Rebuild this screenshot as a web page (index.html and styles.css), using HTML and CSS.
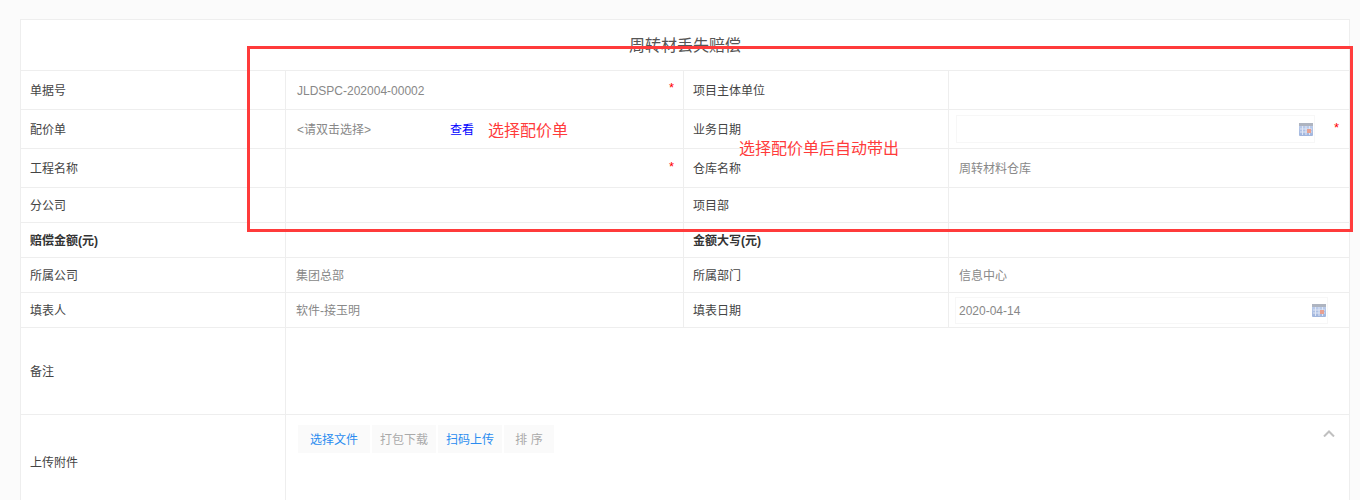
FILE: index.html
```html
<!DOCTYPE html>
<html lang="zh-CN">
<head>
<meta charset="utf-8">
<title>周转材丢失赔偿</title>
<link rel="stylesheet" href="styles.css">
</head>
<body>
<main class="sheet">
  <table class="form">
    <colgroup><col class="c-label"><col class="c-value"><col class="c-label"><col></colgroup>
    <tr class="r-title"><th colspan="4" class="title">周转材丢失赔偿</th></tr>
    <tr class="r-lg">
      <td class="label">单据号</td>
      <td class="value"><div class="line inset"><span>JLDSPC-202004-00002</span><span class="star">*</span></div></td>
      <td class="label">项目主体单位</td>
      <td class="value"></td>
    </tr>
    <tr class="r-lg">
      <td class="label">配价单</td>
      <td class="value"><div class="line inset"><span class="pick">&lt;请双击选择&gt;</span><a class="view">查看</a><span class="note">选择配价单</span></div></td>
      <td class="label">业务日期</td>
      <td class="value"><div class="line"><div class="date date-a"><svg class="cal" viewBox="0 0 14 13"><use href="#cal"/></svg></div><span class="star star-b">*</span></div></td>
    </tr>
    <tr class="r-lg">
      <td class="label">工程名称</td>
      <td class="value"><div class="line inset"><span></span><span class="star">*</span></div></td>
      <td class="label">仓库名称</td>
      <td class="value pad">周转材料仓库</td>
    </tr>
    <tr class="r-md">
      <td class="label">分公司</td><td class="value"></td>
      <td class="label">项目部</td><td class="value"></td>
    </tr>
    <tr class="r-md">
      <td class="label strong">赔偿金额(元)</td><td class="value"></td>
      <td class="label strong">金额大写(元)</td><td class="value"></td>
    </tr>
    <tr class="r-md">
      <td class="label">所属公司</td><td class="value pad-l">集团总部</td>
      <td class="label">所属部门</td><td class="value pad">信息中心</td>
    </tr>
    <tr class="r-md">
      <td class="label">填表人</td><td class="value pad-l">软件-接玉明</td>
      <td class="label">填表日期</td>
      <td class="value"><div class="date date-b"><span class="date-text">2020-04-14</span><svg class="cal" viewBox="0 0 14 13"><use href="#cal"/></svg></div></td>
    </tr>
    <tr class="r-xl">
      <td class="label">备注</td><td colspan="3" class="value"></td>
    </tr>
    <tr class="r-up">
      <td class="label">上传附件</td>
      <td colspan="3" class="upload">
        <div class="tools">
          <div class="btns">
            <button class="btn btn-main link">选择文件</button>
            <button class="btn muted">打包下载</button>
            <button class="btn link">扫码上传</button>
            <button class="btn muted btn-sort">排 序</button>
          </div>
          <svg class="chev" viewBox="0 0 12 7"><path d="M1 6.500 6 1.500 11 6.500" fill="none" stroke="#c0c0c0" stroke-width="2"/></svg>
        </div>
      </td>
    </tr>
  </table>
  <div class="frame"></div>
  <div class="note note-auto">选择配价单后自动带出</div>
</main>
<svg class="defs" width="0" height="0">
  <defs>
    <linearGradient id="calg" x1="0" y1="0" x2="0" y2="1"><stop offset="0" stop-color="#c3d3f0"/><stop offset="1" stop-color="#9fb4dc"/></linearGradient>
    <symbol id="cal" viewBox="0 0 14 13">
      <rect width="14" height="13" rx="1" fill="url(#calg)"/>
      <rect width="14" height="3" fill="#aeb4c0"/>
      <path d="M3.500 3v9M7 3v9M10.500 3v9M1 6h12M1 9h12" stroke="#dfe6f5" stroke-width="1"/>
      <rect x="8" y="6" width="4" height="4" fill="#e8a090"/>
    </symbol>
  </defs>
</svg>
</body>
</html>
```
FILE: styles.css
```css
html, body {
  margin: 0;
  height: 500px;
  overflow: hidden;
  background: #fbfbfb;
}
body {
  font: 12px/1.4 "Liberation Sans", "Noto Sans CJK SC", sans-serif;
  color: #444;
}
.sheet {
  position: relative;
  padding: 19px 10px 0 20px;
}
.form {
  width: 1330px;
  table-layout: fixed;
  border-collapse: collapse;
  background: #fff;
}
.form th, .form td {
  border: 1px solid #eee;
  padding: 0;
  vertical-align: middle;
}
.c-label { width: 265px; }
.c-value { width: 398px; }
.r-title { height: 51px; }
.r-lg { height: 39px; }
.r-md { height: 35px; }
.r-xl { height: 87px; }
.r-up { height: 95px; }
.form .title {
  padding-top: 2px;
  font-size: 16px;
  font-weight: 400;
  color: #555;
}
.form .label {
  padding: 2px 0 0 9px;
  color: #444;
}
.form .strong {
  font-weight: 700;
  color: #333;
}
.value { color: #888; }
.form .pad,
.form .pad-l { padding: 2px 0 0 10px; }
.line {
  display: flex;
  align-items: center;
}
.inset {
  justify-content: flex-start;
  padding: 2px 9px 0 11px;
}
.inset .star { margin-left: auto; }
.star {
  color: #f00;
  font-size: 13px;
  line-height: 1;
  position: relative;
  top: -3px;
}
.pick { width: 153px; }
.view {
  color: #00f;
  cursor: pointer;
}
.note {
  color: #ff3b3b;
  font-size: 16px;
  line-height: 1;
}
.inset .note {
  margin-left: 14px;
  padding-top: 2px;
}
.date {
  display: flex;
  align-items: center;
  justify-content: space-between;
  box-sizing: border-box;
  border: 1px solid #f7f7f7;
}
.date-a {
  justify-content: flex-end;
  width: 359px;
  height: 28px;
  margin-left: 7px;
  padding-right: 1px;
}
.star-b {
  top: -2px;
  margin-left: 19px;
}
.date-b {
  width: 373px;
  height: 27px;
  margin-left: 6px;
  padding: 0 1px 0 3px;
}
.date-text { padding-top: 2px; }
.cal {
  width: 14px;
  height: 13px;
  flex: none;
}
.form .upload { vertical-align: top; }
.tools {
  display: flex;
  justify-content: space-between;
  padding: 10px 14px 0 12px;
}
.btns {
  display: flex;
  gap: 2px;
}
.btn {
  box-sizing: border-box;
  height: 28px;
  width: 64px;
  padding: 2px 0 0;
  border: 0;
  background: #fafafa;
  font: inherit;
}
.btn-main { width: 72px; }
.btn-sort { width: 50px; }
.link { color: #2a8cf0; }
.muted { color: #aaa; }
.chev {
  width: 12px;
  height: 7px;
  margin-top: 5px;
}
.frame {
  position: absolute;
  left: 247px;
  top: 46px;
  width: 1100px;
  height: 180px;
  border: 3px solid #ff3b3b;
}
.note-auto {
  position: absolute;
  left: 739px;
  top: 141px;
}
.defs { position: absolute; }
```
